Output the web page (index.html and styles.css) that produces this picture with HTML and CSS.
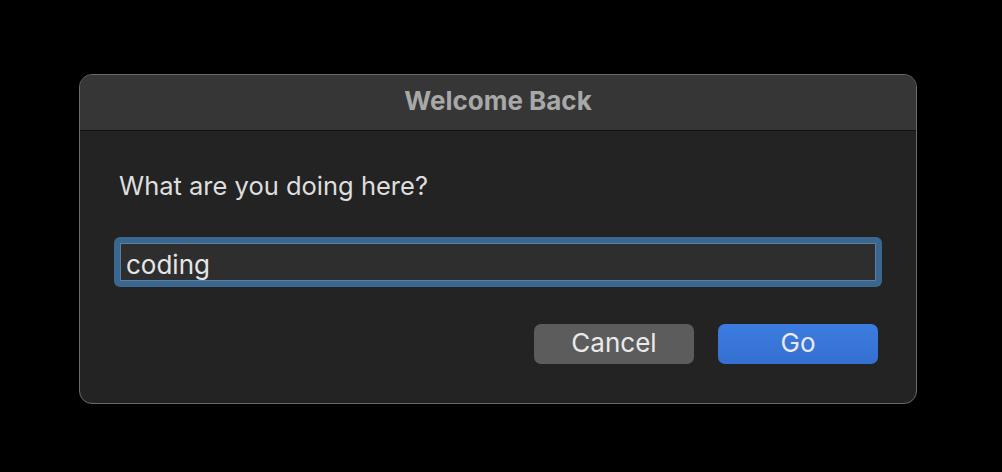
FILE: index.html
```html
<!DOCTYPE html>
<html>
<head>
<meta charset="utf-8">
<link rel="stylesheet" href="styles.css">
</head>
<body>
<div class="window">
  <div class="titlebar">Welcome Back</div>
  <div class="content">
    <div class="label">What are you doing here?</div>
    <div class="ring"><div class="field">coding</div></div>
    <div class="actions">
      <div class="btn cancel">Cancel</div>
      <div class="btn go">Go</div>
    </div>
  </div>
</div>
</body>
</html>
```
FILE: styles.css
```css
html, body { margin: 0; padding: 0; background: #000; }
body {
  width: 1002px; height: 472px; overflow: hidden;
  font-family: Inter, "Liberation Sans", sans-serif;
  padding: 74px 0 0 79px; box-sizing: border-box;
}
.window {
  width: 838px; height: 330px; box-sizing: border-box;
  border: 1px solid #6b6b6b; border-radius: 13px;
  background: #232323; overflow: hidden;
  display: flex; flex-direction: column;
}
.titlebar {
  height: 56px; flex: none; box-sizing: border-box; background: #363636;
  border-bottom: 1px solid #111;
  display: flex; align-items: center; justify-content: center;
  color: #a8a8a8; font-weight: 700; font-size: 26px;
  padding-bottom: 5px;
}
.content { padding: 40px 34px 0 34px; display: flex; flex-direction: column; }
.label { color: #dedede; font-size: 25.5px; line-height: 30px; margin-left: 5px; }
.ring {
  margin-top: 36px; height: 50px; flex: none; box-sizing: border-box;
  border-radius: 6px; background: #3a6790; padding: 6px;
  width: 768px;
}
.field {
  height: 38px; box-sizing: border-box;
  background: #2e2e2e; border: 1px solid #5b7fa3;
  color: #e6e6e6; font-size: 26px; line-height: 32px; padding: 5px 0 0 5px;
}
.actions { display: flex; justify-content: flex-end; gap: 24px; margin-top: 37px; padding-right: 4px; }
.btn {
  width: 160px; height: 40px; box-sizing: border-box; border-radius: 7px;
  display: flex; align-items: center; justify-content: center;
  color: #eaeaea; font-size: 26px; padding-bottom: 3px;
}
.cancel { background: #5c5c5c; }
.go { background: linear-gradient(#3c7ce0, #3570d0); }
```
